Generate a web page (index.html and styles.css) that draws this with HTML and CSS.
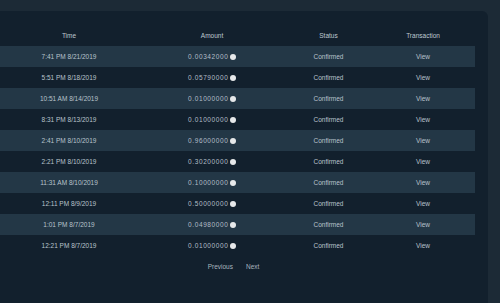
FILE: index.html
```html
<!DOCTYPE html>
<html>
<head>
<meta charset="utf-8">
<link rel="stylesheet" href="styles.css">
</head>
<body>
<div class="card">
  <div class="table">
    <div class="row head">
      <div class="c c1">Time</div>
      <div class="c c2">Amount</div>
      <div class="c c3">Status</div>
      <div class="c c4">Transaction</div>
    </div>
    <div class="row odd"><div class="c c1">7:41 PM 8/21/2019</div><div class="c c2"><span class="amt">0.00342000</span><span class="coin"></span></div><div class="c c3">Confirmed</div><div class="c c4">View</div></div>
    <div class="row"><div class="c c1">5:51 PM 8/18/2019</div><div class="c c2"><span class="amt">0.05790000</span><span class="coin"></span></div><div class="c c3">Confirmed</div><div class="c c4">View</div></div>
    <div class="row odd"><div class="c c1">10:51 AM 8/14/2019</div><div class="c c2"><span class="amt">0.01000000</span><span class="coin"></span></div><div class="c c3">Confirmed</div><div class="c c4">View</div></div>
    <div class="row"><div class="c c1">8:31 PM 8/13/2019</div><div class="c c2"><span class="amt">0.01000000</span><span class="coin"></span></div><div class="c c3">Confirmed</div><div class="c c4">View</div></div>
    <div class="row odd"><div class="c c1">2:41 PM 8/10/2019</div><div class="c c2"><span class="amt">0.96000000</span><span class="coin"></span></div><div class="c c3">Confirmed</div><div class="c c4">View</div></div>
    <div class="row"><div class="c c1">2:21 PM 8/10/2019</div><div class="c c2"><span class="amt">0.30200000</span><span class="coin"></span></div><div class="c c3">Confirmed</div><div class="c c4">View</div></div>
    <div class="row odd"><div class="c c1">11:31 AM 8/10/2019</div><div class="c c2"><span class="amt">0.10000000</span><span class="coin"></span></div><div class="c c3">Confirmed</div><div class="c c4">View</div></div>
    <div class="row"><div class="c c1">12:11 PM 8/9/2019</div><div class="c c2"><span class="amt">0.50000000</span><span class="coin"></span></div><div class="c c3">Confirmed</div><div class="c c4">View</div></div>
    <div class="row odd"><div class="c c1">1:01 PM 8/7/2019</div><div class="c c2"><span class="amt">0.04980000</span><span class="coin"></span></div><div class="c c3">Confirmed</div><div class="c c4">View</div></div>
    <div class="row"><div class="c c1">12:21 PM 8/7/2019</div><div class="c c2"><span class="amt">0.01000000</span><span class="coin"></span></div><div class="c c3">Confirmed</div><div class="c c4">View</div></div>
    <div class="pager">
      <span>Previous</span>
      <span>Next</span>
    </div>
  </div>
</div>
</body>
</html>
```
FILE: styles.css
```css
html, body {
  margin: 0;
  padding: 0;
  background: #1c2a36;
  height: 100%;
  overflow: hidden;
}
body {
  font-family: "Liberation Sans", Arial, sans-serif;
  font-size: 6.5px;
  color: #b9c3cc;
}
.card {
  margin-top: 11px;
  width: 488px;
  height: 292px;
  background: #12202d;
  border-top-right-radius: 6px;
  padding-top: 14px;
  box-sizing: border-box;
}
.table {
  width: 475px;
}
.row {
  display: flex;
  height: 21px;
  align-items: center;
}
.row.odd {
  background: #233746;
}
.head {
  color: #bfc8d0;
}
.c {
  text-align: center;
  display: flex;
  justify-content: center;
  align-items: center;
}
.c1 { width: 138px; }
.c2 { width: 148px; }
.c3 { width: 85px; }
.c4 { width: 104px; }
.amt {
  letter-spacing: 0.6px;
  color: #b3bdc6;
}
.coin {
  display: inline-block;
  width: 6px;
  height: 6px;
  border-radius: 50%;
  background: #e6e8ea;
  margin-left: 1.5px;
}
.pager {
  display: flex;
  justify-content: center;
  gap: 13px;
  padding-top: 7px;
  padding-right: 8px;
  color: #a9b4be;
}
```
